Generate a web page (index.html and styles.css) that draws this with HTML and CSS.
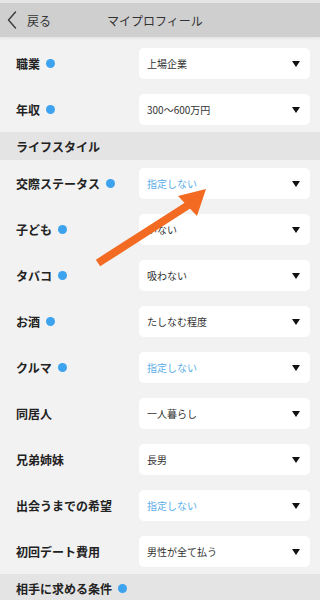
FILE: index.html
```html
<!DOCTYPE html>
<html lang="ja">
<head>
<meta charset="utf-8">
<link rel="stylesheet" href="styles.css">
</head>
<body>
<div class="page">
  <header class="topbar">
    <svg class="back-icon" width="10" height="18" viewBox="0 0 10 18"><path d="M8.5 1 L1.5 9 L8.5 17" fill="none" stroke="#3a3a3a" stroke-width="1.4" stroke-linecap="round" stroke-linejoin="round"/></svg>
    <span class="back-text">戻る</span>
    <span class="title">マイプロフィール</span>
  </header>

  <div class="group first">
    <div class="row"><div class="label">職業<span class="dot"></span></div><div class="select"><span class="val">上場企業</span><span class="tri"></span></div></div>
    <div class="row"><div class="label">年収<span class="dot"></span></div><div class="select"><span class="val">300〜600万円</span><span class="tri"></span></div></div>
  </div>

  <div class="section">ライフスタイル</div>

  <div class="group">
    <div class="row"><div class="label">交際ステータス<span class="dot"></span></div><div class="select"><span class="val ph">指定しない</span><span class="tri"></span></div></div>
    <div class="row"><div class="label">子ども<span class="dot"></span></div><div class="select"><span class="val">いない</span><span class="tri"></span></div></div>
    <div class="row"><div class="label">タバコ<span class="dot"></span></div><div class="select"><span class="val">吸わない</span><span class="tri"></span></div></div>
    <div class="row"><div class="label">お酒<span class="dot"></span></div><div class="select"><span class="val">たしなむ程度</span><span class="tri"></span></div></div>
    <div class="row"><div class="label">クルマ<span class="dot"></span></div><div class="select"><span class="val ph">指定しない</span><span class="tri"></span></div></div>
    <div class="row"><div class="label">同居人</div><div class="select"><span class="val">一人暮らし</span><span class="tri"></span></div></div>
    <div class="row"><div class="label">兄弟姉妹</div><div class="select"><span class="val">長男</span><span class="tri"></span></div></div>
    <div class="row"><div class="label">出会うまでの希望</div><div class="select"><span class="val ph">指定しない</span><span class="tri"></span></div></div>
    <div class="row"><div class="label">初回デート費用</div><div class="select"><span class="val">男性が全て払う</span><span class="tri"></span></div></div>
  </div>

  <div class="section">相手に求める条件<span class="dot"></span></div>

  <svg class="arrow" width="320" height="600" viewBox="0 0 320 600">
    <line x1="98" y1="263" x2="190" y2="204" stroke="#f36b22" stroke-width="8"/>
    <polygon points="206,189 178,196 197,216" fill="#f36b22"/>
  </svg>
</div>
</body>
</html>
```

FILE: styles.css
```css
* { box-sizing: border-box; }
html, body { margin: 0; padding: 0; }
body {
  background: #f2f2f2;
  font-family: "Noto Sans CJK JP", "Noto Sans", sans-serif;
  color: #222;
}
.page {
  position: relative;
  width: 320px;
  height: 600px;
  overflow: hidden;
}
.topbar {
  height: 37px;
  border-top: 3px solid #e6e6e6;
  background: #cfcfcf;
  display: flex;
  align-items: center;
  padding-left: 7px;
  box-shadow: 0 1px 3px rgba(0,0,0,0.08);
}
.back-icon { display: block; flex: none; }
.back-text {
  margin-left: 10px;
  font-size: 12px;
  color: #333;
}
.title {
  margin-left: 56px;
  font-size: 12px;
  color: #333;
}
.group.first { padding-top: 3px; }
.row {
  height: 46px;
  display: flex;
  align-items: center;
  padding-left: 16px;
}
.label {
  width: 123px;
  flex: none;
  font-size: 12px;
  font-weight: 700;
  color: #222;
  display: flex;
  align-items: center;
  white-space: nowrap;
}
.dot {
  display: inline-block;
  width: 9px;
  height: 9px;
  border-radius: 50%;
  background: #3ea3ee;
  margin-left: 6px;
  flex: none;
}
.select {
  width: 171px;
  height: 31px;
  margin-top: 1px;
  background: #fff;
  border-radius: 5px;
  display: flex;
  align-items: center;
  justify-content: space-between;
  padding: 0 10px 0 8px;
}
.val {
  font-size: 10px;
  color: #333;
}
.val.ph { color: #5aaee8; }
.tri {
  width: 0;
  height: 0;
  border-left: 4px solid transparent;
  border-right: 4px solid transparent;
  border-top: 6px solid #111;
}
.section {
  height: 28px;
  background: #e4e4e4;
  display: flex;
  align-items: center;
  padding-left: 16px;
  font-size: 12px;
  font-weight: 700;
  color: #222;
}
.section .dot { margin-left: 6px; }
.arrow {
  position: absolute;
  left: 0;
  top: 0;
  pointer-events: none;
}
```
